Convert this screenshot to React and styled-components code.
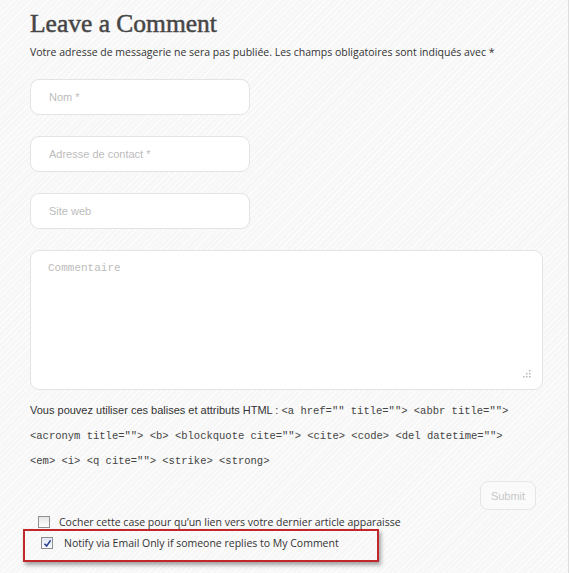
import React from 'react';
import styled, { createGlobalStyle } from 'styled-components';

const GlobalStyle = createGlobalStyle`
  html, body {
    margin: 0;
    padding: 0;
    background: #fff;
  }
`;

const Page = styled.div`
  box-sizing: border-box;
  width: 569px;
  height: 573px;
  padding: 8px 0 0 30px;
  border-right: 1px solid #dedede;
  background-color: #f7f7f7;
  background-image: repeating-linear-gradient(
    -45deg,
    rgba(255, 255, 255, 0.7) 0 1px,
    rgba(0, 0, 0, 0) 1px 4px
  );
  overflow: hidden;
`;

const Title = styled.h2`
  margin: 0;
  font-family: 'Liberation Serif', 'Times New Roman', serif;
  font-weight: 400;
  font-size: 25.5px;
  line-height: 32px;
  color: #464646;
  -webkit-text-stroke: 0.5px #464646;
`;

const Note = styled.p`
  margin: 4px 0 0;
  font-family: 'Open Sans', sans-serif;
  font-size: 10.5px;
  line-height: 16px;
  color: #333;
`;

const Field = styled.div`
  box-sizing: border-box;
  width: ${({ $wide }) => ($wide ? '513px' : '220px')};
  height: ${({ $wide }) => ($wide ? '140px' : '36px')};
  margin-top: ${({ $first }) => ($first ? '19px' : '21px')};
  padding: ${({ $wide }) => ($wide ? '11px 17px' : '0 18px')};
  display: flex;
  align-items: ${({ $wide }) => ($wide ? 'flex-start' : 'center')};
  position: relative;
  background: #fff;
  border: 1px solid #e3e3e3;
  border-radius: 9px;
  font-family: ${({ $wide }) =>
    $wide ? "'Liberation Mono', monospace" : "'Liberation Sans', Arial, sans-serif"};
  font-size: 11px;
  color: #bcbcbc;
`;

const Grip = styled.svg`
  position: absolute;
  right: 11px;
  bottom: 11px;
`;

const Tags = styled.p`
  margin: 8px 0 0;
  white-space: nowrap;
  font-family: 'Liberation Sans', Arial, sans-serif;
  font-size: 11px;
  line-height: 24px;
  color: #333;

  code {
    font-family: 'Liberation Mono', monospace;
    font-size: 10.5px;
    color: #444;
  }
`;

const SubmitRow = styled.div`
  display: flex;
  justify-content: flex-end;
  width: 506px;
  margin-top: 8px;
`;

const Submit = styled.button`
  box-sizing: border-box;
  width: 56px;
  height: 29px;
  padding: 0;
  background: #fafafa;
  border: 1px solid #e6e6e6;
  border-radius: 8px;
  font-family: 'Liberation Sans', Arial, sans-serif;
  font-size: 11px;
  color: #c8c8c8;
`;

const CheckRow = styled.label`
  display: flex;
  align-items: center;
  gap: ${({ $gap }) => $gap}px;
  height: 16px;
  margin-top: ${({ $top = 0 }) => $top}px;
  padding-left: ${({ $indent }) => $indent}px;
  font-family: 'Open Sans', sans-serif;
  font-size: 10.5px;
  color: #333;
`;

const Box = styled.span`
  box-sizing: border-box;
  width: 12px;
  height: 12px;
  border: 1px solid #8f8f8f;
  background: ${({ $checked }) =>
    $checked ? 'linear-gradient(#dfe6f3, #fbfcff)' : 'linear-gradient(#e6e6e6, #fdfdfd)'};
  display: flex;
  align-items: center;
  justify-content: center;
`;

const Highlight = styled.div`
  box-sizing: border-box;
  width: 356px;
  height: 33px;
  margin: -1px 0 0 -7px;
  padding-top: 4px;
  border: 2px solid #c1272d;
  box-shadow: 2px 3px 4px rgba(0, 0, 0, 0.35);
`;

const Check = ({ checked }) => (
  <Box $checked={checked}>
    {checked && (
      <svg width="9" height="9" viewBox="0 0 9 9">
        <path d="M1.5 4.8 L3.6 7 L7.6 1.4" fill="none" stroke="#2a3f8f" strokeWidth="1.6" />
      </svg>
    )}
  </Box>
);

const App = () => (
  <>
    <GlobalStyle />
    <Page>
      <Title>Leave a Comment</Title>
      <Note>Votre adresse de messagerie ne sera pas publiée. Les champs obligatoires sont indiqués avec *</Note>
      <Field $first>Nom *</Field>
      <Field>Adresse de contact *</Field>
      <Field>Site web</Field>
      <Field $wide>
        Commentaire
        <Grip width="9" height="9" viewBox="0 0 9 9">
          {[
            [7, 1],
            [4, 4],
            [7, 4],
            [1, 7],
            [4, 7],
            [7, 7],
          ].map(([x, y]) => (
            <rect key={`${x}-${y}`} x={x} y={y} width="1.5" height="1.5" fill="#b5b5b5" />
          ))}
        </Grip>
      </Field>
      <Tags>
        Vous pouvez utiliser ces balises et attributs HTML : <code>&lt;a href="" title=""&gt; &lt;abbr title=""&gt;</code>
        <br />
        <code>&lt;acronym title=""&gt; &lt;b&gt; &lt;blockquote cite=""&gt; &lt;cite&gt; &lt;code&gt; &lt;del datetime=""&gt;</code>
        <br />
        <code>&lt;em&gt; &lt;i&gt; &lt;q cite=""&gt; &lt;strike&gt; &lt;strong&gt;</code>
      </Tags>
      <SubmitRow>
        <Submit>Submit</Submit>
      </SubmitRow>
      <CheckRow $indent={8} $gap={9} $top={4}>
        <Check />
        Cocher cette case pour qu’un lien vers votre dernier article apparaisse
      </CheckRow>
      <Highlight>
        <CheckRow $indent={16} $gap={11}>
          <Check checked />
          Notify via Email Only if someone replies to My Comment
        </CheckRow>
      </Highlight>
    </Page>
  </>
);

export default App;
